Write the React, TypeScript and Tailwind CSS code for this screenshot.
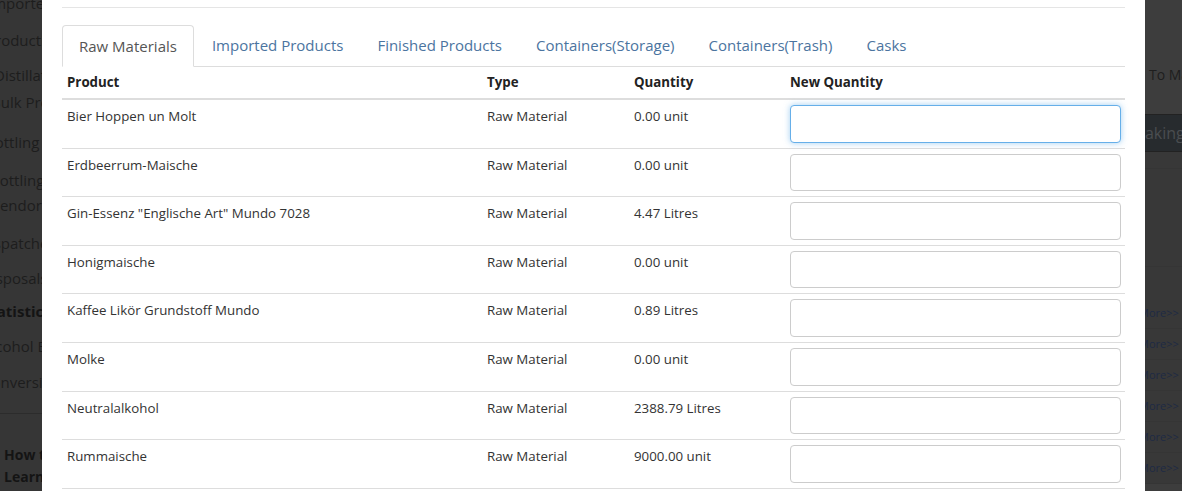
const sideItems = [
  { label: "Imported", shift: "-ml-[12px]", gap: "-mt-[8px]", bold: false },
  { label: "Production", shift: "-ml-[14px]", gap: "mt-[15px]", bold: false },
  { label: "Distillation", shift: "-ml-[6px]", gap: "mt-[13px]", bold: false },
  { label: "Bulk Products", shift: "-ml-[9px]", gap: "mt-[5px]", bold: false },
  { label: "Bottling ▾", shift: "-ml-[15px]", gap: "mt-[18px]", bold: false },
  { label: "Bottling", shift: "-ml-[10px]", gap: "mt-[16px]", bold: false },
  { label: "Vendor", shift: "-ml-[9px]", gap: "mt-[3px]", bold: false },
  { label: "Dispatches", shift: "-ml-[21px]", gap: "mt-[16px]", bold: false },
  { label: "Disposals", shift: "-ml-[19px]", gap: "mt-[13px]", bold: false },
  { label: "Statistics,", shift: "-ml-[18px]", gap: "mt-[11px]", bold: true },
  { label: "Alcohol B", shift: "-ml-[18px]", gap: "mt-[13px]", bold: false },
  { label: "Conversion", shift: "-ml-[18px]", gap: "mt-[14px]", bold: false },
];

const tabs = [
  "Raw Materials",
  "Imported Products",
  "Finished Products",
  "Containers(Storage)",
  "Containers(Trash)",
  "Casks",
];

const rows = [
  { name: "Bier Hoppen un Molt", qty: "0.00 unit" },
  { name: "Erdbeerrum-Maische", qty: "0.00 unit" },
  { name: 'Gin-Essenz "Englische Art" Mundo 7028', qty: "4.47 Litres" },
  { name: "Honigmaische", qty: "0.00 unit" },
  { name: "Kaffee Likör Grundstoff Mundo", qty: "0.89 Litres" },
  { name: "Molke", qty: "0.00 unit" },
  { name: "Neutralalkohol", qty: "2388.79 Litres" },
  { name: "Rummaische", qty: "9000.00 unit" },
];

const cols = "grid grid-cols-[420px_147px_156px_340px]";

export default function App() {
  return (
    <div
      className="flex h-[491px] w-[1182px] overflow-hidden bg-[#3a3a3a]"
      style={{ fontFamily: '"Open Sans", "Noto Sans", sans-serif' }}
    >
      {/* dimmed sidebar behind the modal */}
      <div className="flex w-[42px] shrink-0 flex-col overflow-hidden bg-[#363636] text-[15px] text-[#1d1d1d]">
        <div className="flex flex-col">
          {sideItems.map((it) => (
            <div
              key={it.label}
              className={`whitespace-nowrap leading-[22px] ${it.shift} ${it.gap} ${
                it.bold ? "font-bold text-[#141414]" : ""
              }`}
            >
              {it.label}
            </div>
          ))}
        </div>
        <div className="mt-[20px] h-px w-full bg-[#2c2c2c]" />
        <div className="mt-[30px] pl-[4px] text-[14px] font-bold leading-[22px] text-[#141414]">
          <div className="whitespace-nowrap">How to</div>
          <div className="whitespace-nowrap">Learn</div>
        </div>
      </div>

      {/* modal */}
      <div className="w-[1103px] shrink-0 bg-white px-[20px] text-[#333]">
        <div className="mt-[7px] h-px bg-[#e5e5e5]" />
        <div className="mt-[17px] flex border-b border-[#ddd] text-[15px]">
          {tabs.map((t, i) => (
            <div
              key={t}
              className={
                i === 0
                  ? "-mb-px mr-[2px] rounded-t-[4px] border border-[#ddd] border-b-white bg-white px-[16px] leading-[40px] text-[#555]"
                  : "mr-[2px] px-[16px] leading-[41px] text-[#4b74a0]"
              }
            >
              {t}
            </div>
          ))}
        </div>

        <div className="text-[13.3px]">
          <div className={`${cols} h-[33px] items-center border-b-2 border-[#ddd] font-bold text-[#222]`}>
            <div className="px-[5px] pt-px">Product</div>
            <div className="px-[5px] pt-px">Type</div>
            <div className="px-[5px] pt-px">Quantity</div>
            <div className="px-[5px] pt-px">New Quantity</div>
          </div>
          {rows.map((r, i) => (
            <div key={r.name} className={`${cols} border-b border-[#ddd]`}>
              <div className="px-[5px] pt-[6px] leading-[20px]">{r.name}</div>
              <div className="px-[5px] pt-[6px] leading-[20px]">Raw Material</div>
              <div className="px-[5px] pt-[6px] leading-[20px]">{r.qty}</div>
              <div className="py-[5px] pl-[5px] pr-[4px]">
                <input
                  className={`block h-[37.6px] w-full rounded-[4px] border bg-white px-3 outline-none ${
                    i === 0
                      ? "border-[#66afe9] shadow-[0_0_6px_rgba(102,175,233,0.6)]"
                      : "border-[#ccc]"
                  }`}
                />
              </div>
            </div>
          ))}
        </div>
      </div>

      {/* dimmed page content on the right */}
      <div className="flex w-[37px] shrink-0 flex-col overflow-hidden bg-[#3d3d3d] text-[#1e1e1e]">
        <div className="mt-[65px] pl-[4px] whitespace-nowrap text-[14px] leading-[20px]">
          To Manage
        </div>
        <div className="mt-[29px] -ml-[46px] flex h-[38px] items-center whitespace-nowrap border-y border-[#222] bg-[#272b2e] text-[16px] text-[#4a4d50]">
          Stocktaking
        </div>
        <div className="h-[16px] bg-[#383838]" />
        <div className="h-px bg-[#353535]" />
        <div className="h-[97px] bg-[#383838]" />
        <div className="h-px bg-[#353535]" />
        <div className="flex flex-col bg-[#383838] pt-[31px]">
          {[0, 1, 2, 3, 4, 5].map((k) => (
            <div
              key={k}
              className="-ml-[6px] flex h-[31px] items-center whitespace-nowrap border-b border-[#353535] text-[11px] text-[#1e2a44]"
            >
              More&gt;&gt;
            </div>
          ))}
        </div>
      </div>
    </div>
  );
}
